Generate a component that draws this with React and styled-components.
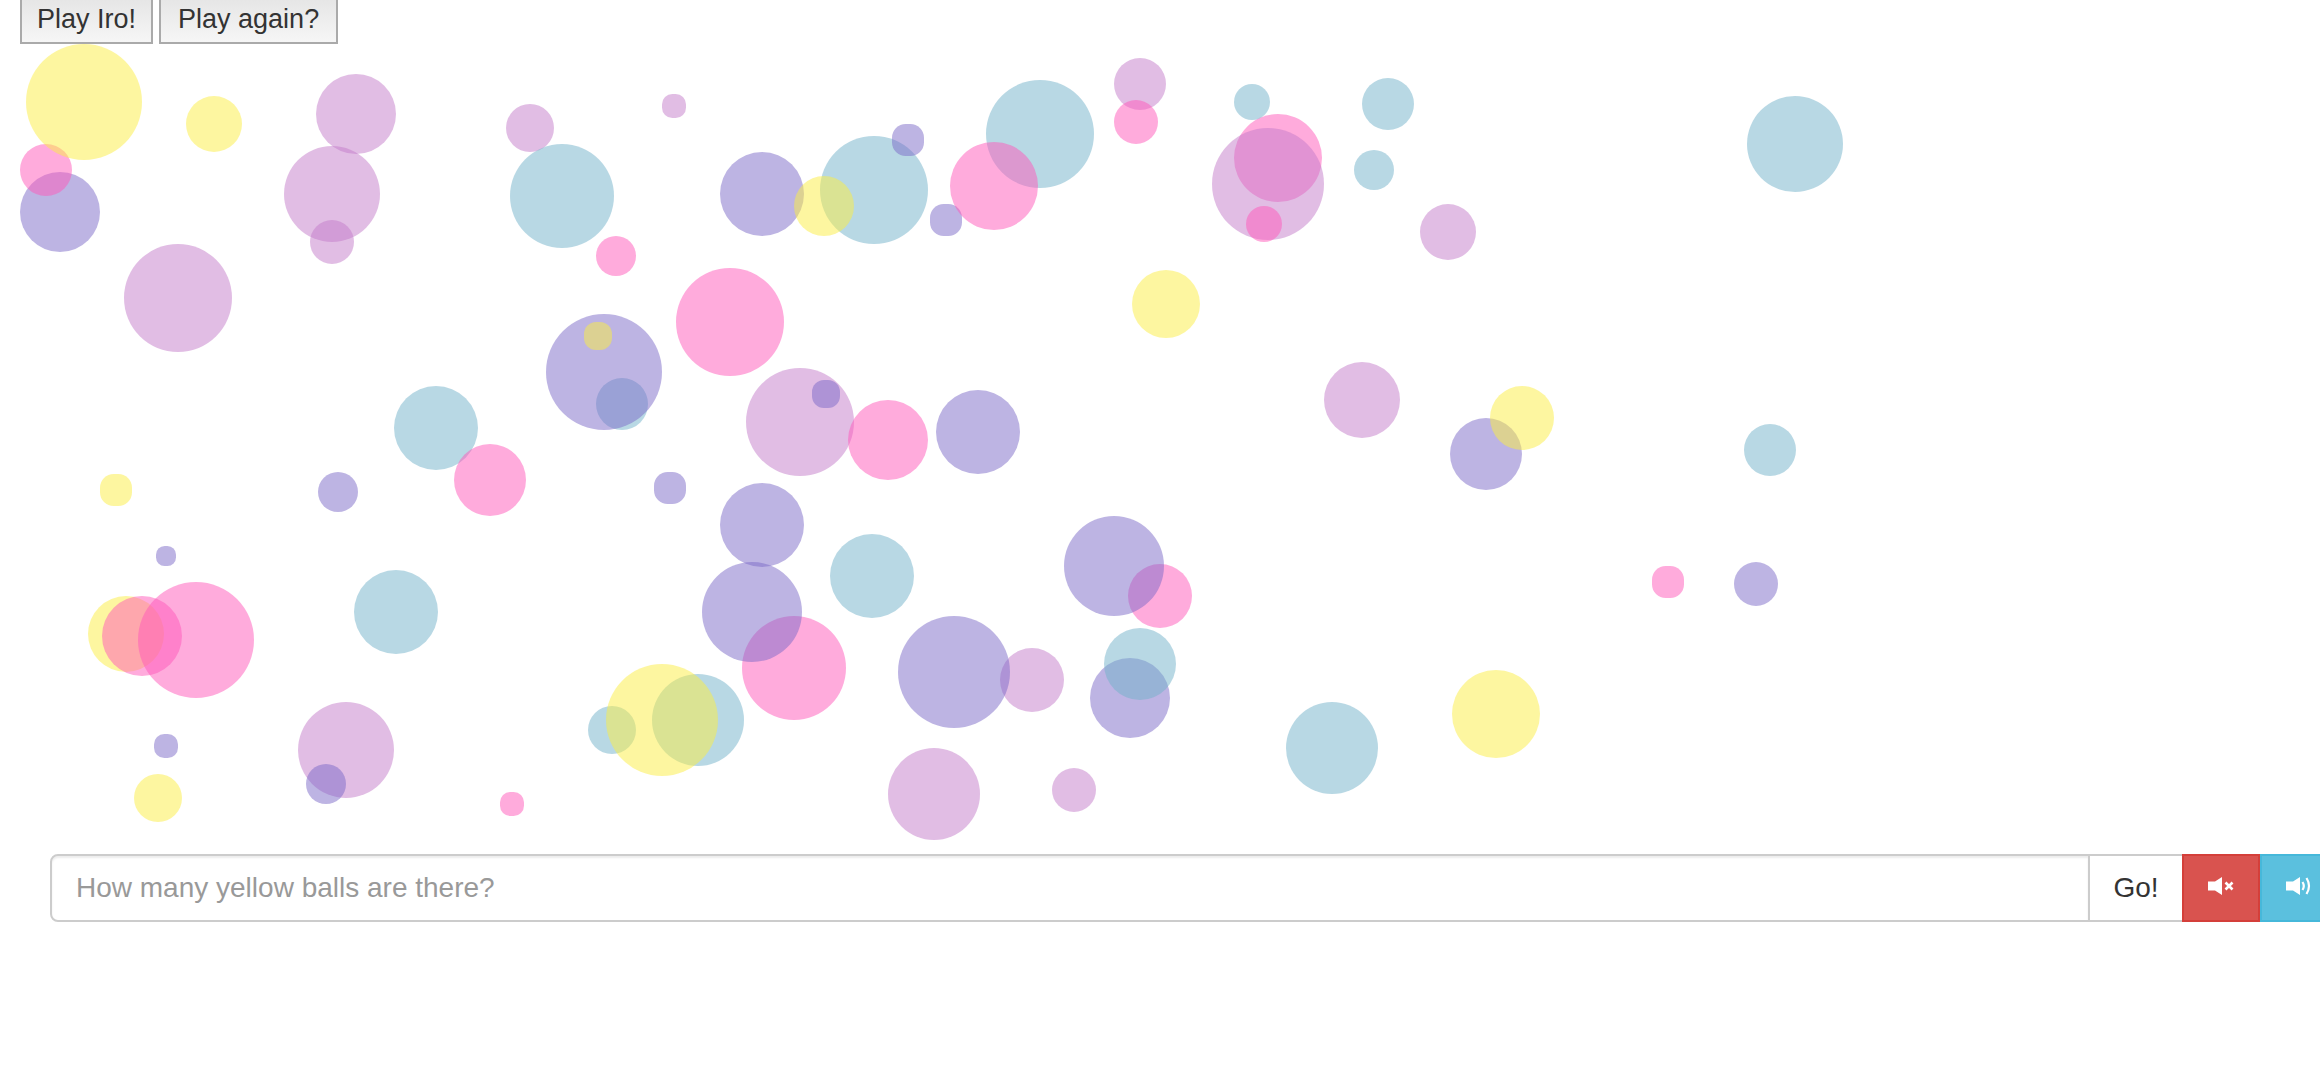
import styled, { createGlobalStyle } from 'styled-components';

const GlobalStyle = createGlobalStyle`
  html, body {
    margin: 0;
    background: #fff;
    overflow: hidden;
    font-family: "Liberation Sans", Arial, sans-serif;
    color: #333;
    text-rendering: geometricPrecision;
  }
`;

const COLORS = {
  pink: 'rgba(255, 87, 185, 0.5)',
  plum: 'rgba(195, 123, 201, 0.5)',
  purple: 'rgba(123, 105, 199, 0.5)',
  blue: 'rgba(113, 177, 201, 0.5)',
  yellow: 'rgba(251, 237, 65, 0.5)',
};

const CANVAS_TOP = 44;

// [colour, centre x, centre y, diameter], in page pixels. Order is paint order.
const BALLS = [
  ['pink', 1278, 158, 88],
  ['pink', 1160, 596, 64],
  ['pink', 794, 668, 104],

  ['blue', 622, 404, 52],
  ['blue', 874, 190, 108],

  ['plum', 356, 114, 80],
  ['plum', 530, 128, 48],
  ['plum', 674, 106, 24],
  ['plum', 332, 194, 96],
  ['plum', 332, 242, 44],
  ['plum', 178, 298, 108],
  ['plum', 800, 422, 108],
  ['plum', 1140, 84, 52],
  ['plum', 1268, 184, 112],
  ['plum', 1448, 232, 56],
  ['plum', 1362, 400, 76],
  ['plum', 346, 750, 96],
  ['plum', 1032, 680, 64],
  ['plum', 934, 794, 92],
  ['plum', 1074, 790, 44],

  ['purple', 60, 212, 80],
  ['purple', 762, 194, 84],
  ['purple', 604, 372, 116],
  ['purple', 908, 140, 32],
  ['purple', 946, 220, 32],
  ['purple', 826, 394, 28],
  ['purple', 978, 432, 84],
  ['purple', 1486, 454, 72],
  ['purple', 338, 492, 40],
  ['purple', 670, 488, 32],
  ['purple', 762, 525, 84],
  ['purple', 166, 556, 20],
  ['purple', 752, 612, 100],
  ['purple', 166, 746, 24],
  ['purple', 326, 784, 40],
  ['purple', 1114, 566, 100],
  ['purple', 1130, 698, 80],
  ['purple', 954, 672, 112],
  ['purple', 1756, 584, 44],

  ['blue', 562, 196, 104],
  ['blue', 436, 428, 84],
  ['blue', 1040, 134, 108],
  ['blue', 1252, 102, 36],
  ['blue', 1388, 104, 52],
  ['blue', 1374, 170, 40],
  ['blue', 396, 612, 84],
  ['blue', 698, 720, 92],
  ['blue', 612, 730, 48],
  ['blue', 872, 576, 84],
  ['blue', 1140, 664, 72],
  ['blue', 1332, 748, 92],
  ['blue', 1795, 144, 96],
  ['blue', 1770, 450, 52],

  ['pink', 46, 170, 52],

  ['yellow', 84, 102, 116],
  ['yellow', 214, 124, 56],
  ['yellow', 598, 336, 28],
  ['yellow', 824, 206, 60],
  ['yellow', 1166, 304, 68],
  ['yellow', 1522, 418, 64],
  ['yellow', 116, 490, 32],
  ['yellow', 126, 634, 76],
  ['yellow', 662, 720, 112],
  ['yellow', 158, 798, 48],
  ['yellow', 1496, 714, 88],

  ['pink', 616, 256, 40],
  ['pink', 730, 322, 108],
  ['pink', 994, 186, 88],
  ['pink', 1136, 122, 44],
  ['pink', 1264, 224, 36],
  ['pink', 888, 440, 80],
  ['pink', 490, 480, 72],
  ['pink', 142, 636, 80],
  ['pink', 196, 640, 116],
  ['pink', 512, 804, 24],
  ['pink', 1668, 582, 32],
];

const Toolbar = styled.div`
  display: flex;
  gap: 6px;
  height: 44px;
  padding-left: 20px;
  box-sizing: border-box;
  overflow: hidden;
`;

const PlayButton = styled.button`
  height: 46px;
  margin-top: -2px;
  padding: 0 ${(p) => p.$pad}px 3px;
  border: 2px solid #aaa;
  background: linear-gradient(#e6e6e6, #f6f6f6);
  font: 27px "Liberation Sans", Arial, sans-serif;
  color: #333;
`;

const Canvas = styled.div`
  position: relative;
  height: 810px;
`;

const Ball = styled.div`
  position: absolute;
  left: ${(p) => p.$x - p.$size / 2}px;
  top: ${(p) => p.$y - CANVAS_TOP - p.$size / 2}px;
  width: ${(p) => p.$size}px;
  height: ${(p) => p.$size}px;
  /* the smallest balls come out as rounded squares in the game */
  border-radius: ${(p) => (p.$size <= 32 ? `${p.$size * 0.43}px` : '50%')};
  background: ${(p) => COLORS[p.$color]};
`;

const AnswerRow = styled.form`
  display: flex;
  width: 2288px;
  height: 68px;
  margin: 0 0 0 50px;
`;

const AnswerInput = styled.input`
  flex: 1;
  min-width: 0;
  box-sizing: border-box;
  padding: 0 24px;
  border: 2px solid #ccc;
  border-radius: 8px 0 0 8px;
  box-shadow: inset 0 2px 2px rgba(0, 0, 0, 0.075);
  outline: none;
  font: 28px "Liberation Sans", Arial, sans-serif;
  color: #555;

  &::placeholder {
    color: #999;
    opacity: 1;
  }
`;

const GoButton = styled.button`
  width: 92px;
  box-sizing: border-box;
  padding: 0;
  border: 2px solid #ccc;
  border-left: 0;
  border-right: 0;
  background: #fff;
  font: 28px "Liberation Sans", Arial, sans-serif;
  color: #333;
`;

const SoundButton = styled.button`
  display: flex;
  align-items: center;
  justify-content: center;
  width: 78px;
  box-sizing: border-box;
  padding: 0;
  border: 2px solid ${(p) => (p.$variant === 'danger' ? '#d43f3a' : '#46b8da')};
  background: ${(p) => (p.$variant === 'danger' ? '#d9534f' : '#5bc0de')};
`;

function MuteIcon() {
  return (
    <svg width="26" height="22" viewBox="0 0 26 22">
      <path d="M0 4.5h7L14 0v18L7 13.5H0z" fill="#fff" />
      <path d="M17.5 5.5l7 7M24.5 5.5l-7 7" stroke="#fff" strokeWidth="2.6" fill="none" />
    </svg>
  );
}

function VolumeIcon() {
  return (
    <svg width="26" height="22" viewBox="0 0 26 22">
      <path d="M0 4.5h7L14 0v18L7 13.5H0z" fill="#fff" />
      <path d="M16.5 5q2.6 4 0 8M20.5 1q5 8 0 16" stroke="#fff" strokeWidth="2.2" fill="none" />
    </svg>
  );
}

export default function App() {
  return (
    <>
      <GlobalStyle />
      <Toolbar>
        <PlayButton $pad={15}>Play Iro!</PlayButton>
        <PlayButton $pad={17}>Play again?</PlayButton>
      </Toolbar>
      <Canvas>
        {BALLS.map(([color, x, y, size], index) => (
          <Ball key={index} $color={color} $x={x} $y={y} $size={size} />
        ))}
      </Canvas>
      <AnswerRow onSubmit={(event) => event.preventDefault()}>
        <AnswerInput placeholder="How many yellow balls are there?" />
        <GoButton type="submit">Go!</GoButton>
        <SoundButton type="button" $variant="danger">
          <MuteIcon />
        </SoundButton>
        <SoundButton type="button" $variant="info">
          <VolumeIcon />
        </SoundButton>
      </AnswerRow>
    </>
  );
}
